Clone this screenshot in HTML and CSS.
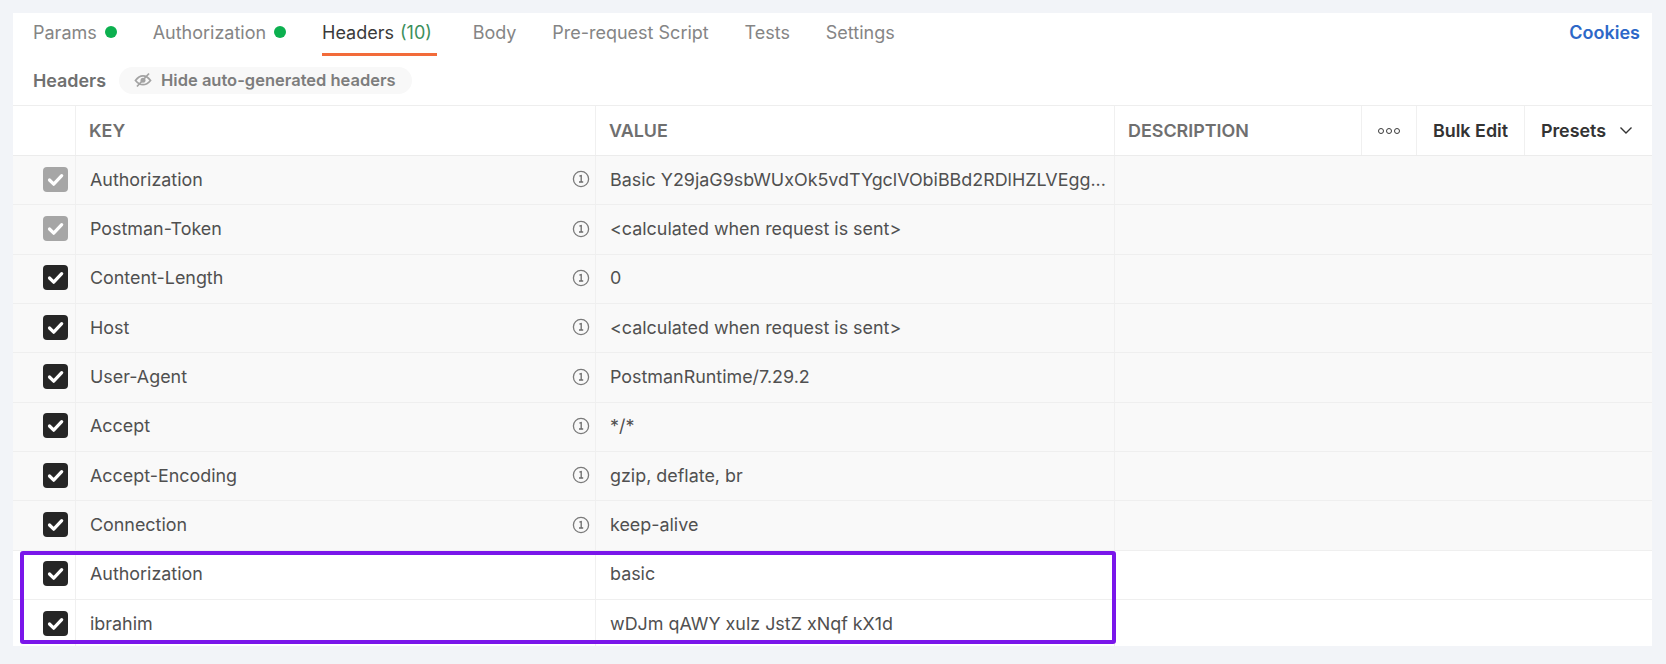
FILE: index.html
```html
<!DOCTYPE html>
<html lang="en">

<head>
  <meta charset="UTF-8">
  <title>Headers</title>
  <link rel="stylesheet" href="styles.css">
</head>
<body>

<svg class="defs" width="0" height="0">
  <symbol id="check" viewBox="0 0 25 25">
    <path d="M6.500 13l4.200 4.200 8-8.600" fill="none" stroke="#fff" stroke-width="3.200" stroke-linecap="round" stroke-linejoin="round"/>
  </symbol>
  <symbol id="info" viewBox="0 0 18 18">
    <circle cx="9" cy="9" r="7.600" fill="none" stroke="#7a7a7a" stroke-width="1.300"/>
    <path d="M7.400 6.200l1.800-.6v6.200M7 12h4.200" fill="none" stroke="#6b6b6b" stroke-width="1.300"/>
  </symbol>
</svg>

<div class="card">
  <nav class="tabs">
    <a class="tab">Params <i class="dot"></i></a>
    <a class="tab">Authorization <i class="dot"></i></a>
    <a class="tab active">Headers <span class="count">(10)</span></a>
    <a class="tab">Body</a>
    <a class="tab">Pre-request Script</a>
    <a class="tab">Tests</a>
    <a class="tab">Settings</a>
    <a class="cookies">Cookies</a>
  </nav>

  <div class="subbar">
    <strong>Headers</strong>
    <span class="pill">
      <svg width="18" height="16" viewBox="0 0 18 16">
        <path d="M1.500 8.500C4 5 6.500 3.800 9 3.800s5 1.200 7.500 4.700C14 11.500 11.500 12.700 9 12.700S4 11.500 1.500 8.500z" fill="none" stroke="#a3a3a3" stroke-width="1.800"/>
        <circle cx="9" cy="8.300" r="2.500" fill="#a3a3a3"/>
        <path d="M3 14.500L15 1.500" stroke="#a3a3a3" stroke-width="1.800"/>
      </svg>
      Hide auto-generated headers
    </span>
  </div>

  <div class="table">
    <div class="head">
      <div class="th th-check"></div>
      <div class="th">KEY</div>
      <div class="th">VALUE</div>
      <div class="th">DESCRIPTION</div>
      <div class="th th-btn th-dots"><i></i><i></i><i></i></div>
      <div class="th th-btn">Bulk Edit</div>
      <div class="th th-btn th-presets">Presets
        <svg width="14" height="9" viewBox="0 0 14 9"><path d="M1.500 1.500L7 7l5.500-5.500" fill="none" stroke="#333" stroke-width="1.400"/></svg>
      </div>
    </div>

    <div class="row auto">
      <div class="cell check"><span class="box off"><svg width="25" height="25"><use href="#check"/></svg></span></div>
      <div class="cell key">Authorization <svg class="info" width="18" height="18"><use href="#info"/></svg></div>
      <div class="cell val">Basic Y29jaG9sbWUxOk5vdTYgclVObiBBd2RDlHZLVEgg...</div>
      <div class="cell"></div>
    </div>
    <div class="row auto">
      <div class="cell check"><span class="box off"><svg width="25" height="25"><use href="#check"/></svg></span></div>
      <div class="cell key">Postman-Token <svg class="info" width="18" height="18"><use href="#info"/></svg></div>
      <div class="cell val">&lt;calculated when request is sent&gt;</div>
      <div class="cell"></div>
    </div>
    <div class="row auto">
      <div class="cell check"><span class="box"><svg width="25" height="25"><use href="#check"/></svg></span></div>
      <div class="cell key">Content-Length <svg class="info" width="18" height="18"><use href="#info"/></svg></div>
      <div class="cell val">0</div>
      <div class="cell"></div>
    </div>
    <div class="row auto">
      <div class="cell check"><span class="box"><svg width="25" height="25"><use href="#check"/></svg></span></div>
      <div class="cell key">Host <svg class="info" width="18" height="18"><use href="#info"/></svg></div>
      <div class="cell val">&lt;calculated when request is sent&gt;</div>
      <div class="cell"></div>
    </div>
    <div class="row auto">
      <div class="cell check"><span class="box"><svg width="25" height="25"><use href="#check"/></svg></span></div>
      <div class="cell key">User-Agent <svg class="info" width="18" height="18"><use href="#info"/></svg></div>
      <div class="cell val">PostmanRuntime/7.29.2</div>
      <div class="cell"></div>
    </div>
    <div class="row auto">
      <div class="cell check"><span class="box"><svg width="25" height="25"><use href="#check"/></svg></span></div>
      <div class="cell key">Accept <svg class="info" width="18" height="18"><use href="#info"/></svg></div>
      <div class="cell val">*/*</div>
      <div class="cell"></div>
    </div>
    <div class="row auto">
      <div class="cell check"><span class="box"><svg width="25" height="25"><use href="#check"/></svg></span></div>
      <div class="cell key">Accept-Encoding <svg class="info" width="18" height="18"><use href="#info"/></svg></div>
      <div class="cell val">gzip, deflate, br</div>
      <div class="cell"></div>
    </div>
    <div class="row auto">
      <div class="cell check"><span class="box"><svg width="25" height="25"><use href="#check"/></svg></span></div>
      <div class="cell key">Connection <svg class="info" width="18" height="18"><use href="#info"/></svg></div>
      <div class="cell val">keep-alive</div>
      <div class="cell"></div>
    </div>
    <div class="row">
      <div class="cell check"><span class="box"><svg width="25" height="25"><use href="#check"/></svg></span></div>
      <div class="cell key">Authorization</div>
      <div class="cell val">basic</div>
      <div class="cell"></div>
    </div>
    <div class="row last">
      <div class="cell check"><span class="box"><svg width="25" height="25"><use href="#check"/></svg></span></div>
      <div class="cell key">ibrahim</div>
      <div class="cell val">wDJm qAWY xulz JstZ xNqf kX1d</div>
      <div class="cell"></div>
    </div>

    <div class="highlight"></div>
  </div>
</div>

</body>
</html>
```

FILE: styles.css
```css
html, body {
  margin: 0;
  padding: 0;
  height: 100%;
  background-color: #f2f4f8;
  font-family: 'Inter', 'Liberation Sans', sans-serif;
  overflow: hidden;
}

.defs {
  display: block;
  height: 0;
}

.card {
  margin: 13px 14px 0 13px;
  height: 633px;
  background: #fff;
  display: flex;
  flex-direction: column;
}

/* tabs */
.tabs {
  display: flex;
  flex: none;
  height: 43px;
  padding-left: 20px;
  font-size: 18px;
  color: #858585;
}

.tab {
  display: flex;
  align-items: center;
  gap: 3px;
  height: 38px;
  padding-bottom: 2px;
  margin-right: 35.8px;
  white-space: pre;
}

.tab.active {
  color: #3a3a3a;
  box-shadow: 0 3px 0 #f26b3a;
  padding-right: 5px;
  gap: 1px;
}

.count {
  color: #3c8f5c;
}

.dot {
  width: 12px;
  height: 12px;
  border-radius: 50%;
  background: #0cb04f;
}

.cookies {
  margin-left: auto;
  margin-right: 12px;
  height: 38px;
  padding-bottom: 2px;
  display: flex;
  align-items: center;
  color: #2d68c8;
  font-weight: 600;
  font-size: 18px;
}

/* sub bar */
.subbar {
  display: flex;
  flex: none;
  align-items: center;
  gap: 13px;
  height: 49px;
  padding: 0 0 1px 20px;
  box-sizing: border-box;
  color: #707070;
  font-size: 17.9px;
}

.subbar strong {
  font-weight: 600;
}

.pill {
  display: flex;
  align-items: center;
  gap: 9px;
  height: 27px;
  padding: 0 16px 0 15px;
  border-radius: 14px;
  background: #f8f8f8;
  font-size: 16.5px;
  font-weight: 600;
  color: #7d7d7d;
}

/* table */
.table {
  position: relative;
  flex: 1;
  min-height: 0;
  overflow: hidden;
  border-top: 1px solid #eeeeee;
}

.head {
  display: grid;
  grid-template-columns: 63px 520px 519px 247px 55px 108px 1fr;
  height: 49px;
  border-bottom: 1px solid #ececec;
  font-size: 17.9px;
}

.th {
  display: flex;
  align-items: center;
  padding-left: 13px;
  border-right: 1px solid #f0f0f0;
  font-weight: 600;
  color: #6f6f6f;
}

.th-check {
  padding: 0;
}

.th-btn {
  color: #333;
  justify-content: center;
  padding: 0;
}

.th-presets {
  border-right: none;
  gap: 13px;
  padding-right: 3px;
}

.th-dots {
  gap: 2px;
}

.th-dots i {
  width: 4px;
  height: 4px;
  border: 1.6px solid #3a3a3a;
  border-radius: 50%;
}

.row {
  display: grid;
  grid-template-columns: 63px 520px 519px 1fr;
  height: 49.35px;
  box-sizing: border-box;
  border-bottom: 1px solid #efefef;
  font-size: 17.9px;
  color: #505050;
}

.row.auto {
  background: #f9f9f9;
}

.row.last {
  border-bottom: none;
}

.cell {
  display: flex;
  align-items: center;
  border-right: 1px solid #f0f0f0;
  min-width: 0;
  padding-bottom: 2px;
  box-sizing: border-box;
  white-space: nowrap;
}

.cell:last-child {
  border-right: none;
}

.check {
  justify-content: flex-end;
  padding-right: 7px;
}

.key {
  justify-content: space-between;
  padding-left: 14px;
  padding-right: 5px;
}

.val {
  padding-left: 14px;
  padding-right: 8px;
  overflow: hidden;
}

.box {
  display: block;
  width: 25px;
  height: 25px;
  border-radius: 4px;
  background: #262626;
}

.box.off {
  background: #a6a6a6;
}

.box svg {
  display: block;
}

.highlight {
  position: absolute;
  left: 7px;
  top: 445px;
  width: 1096px;
  height: 93px;
  box-sizing: border-box;
  border: 4px solid #7a16ea;
  border-radius: 3px;
}
```
